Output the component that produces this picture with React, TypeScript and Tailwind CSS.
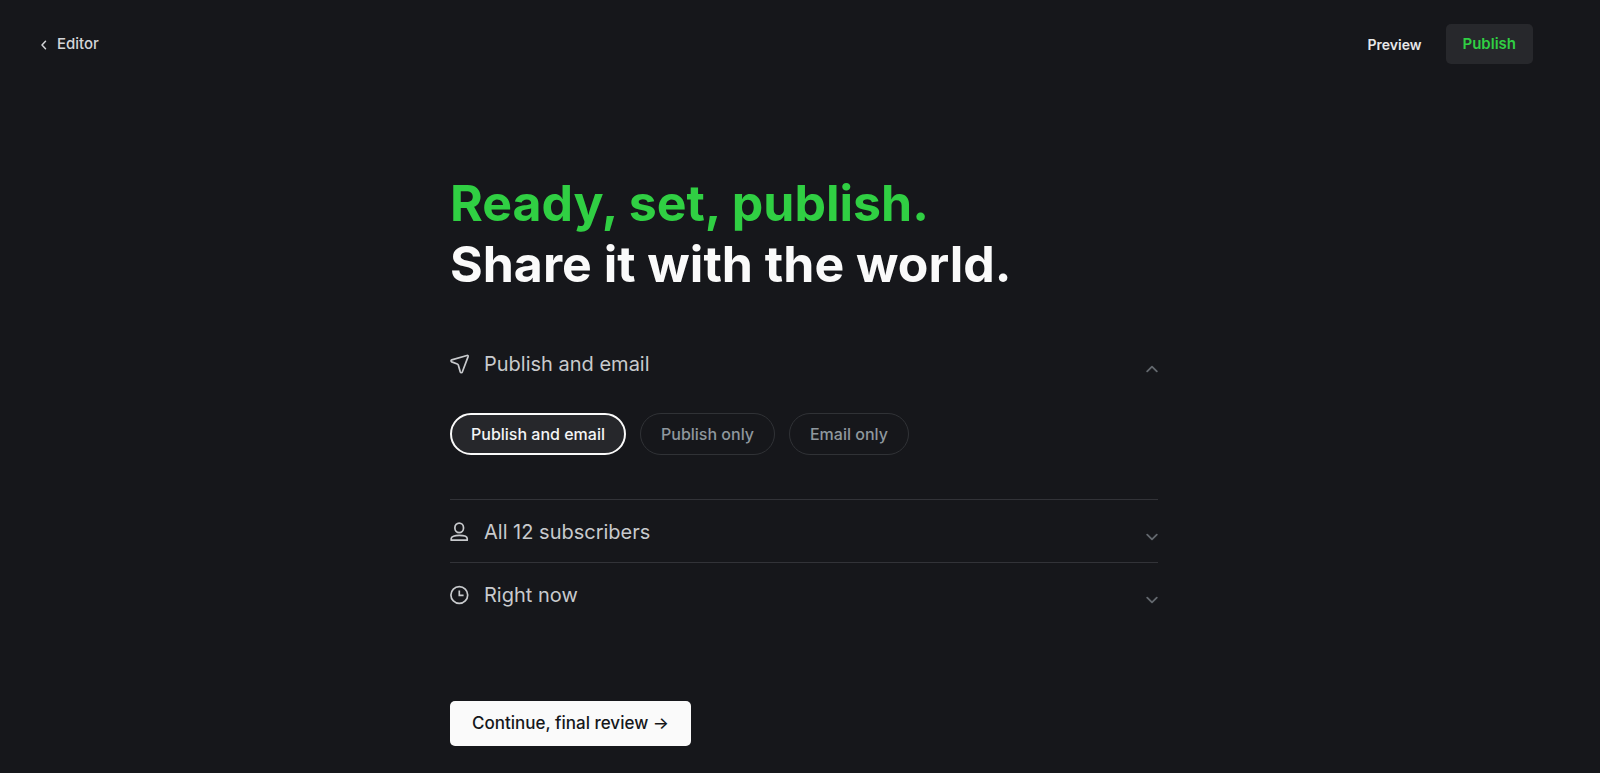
import type { ReactNode } from 'react';
import clsx from 'clsx';

type Setting = {
    id: string;
    label: string;
    icon: ReactNode;
    open?: boolean;
};

const publishTypes = [
    { value: 'publish+send', label: 'Publish and email' },
    { value: 'publish', label: 'Publish only' },
    { value: 'send', label: 'Email only' },
];

function Icon({ children }: { children: ReactNode }) {
    return (
        <svg
            className="size-5 shrink-0"
            viewBox="0 0 20 20"
            fill="none"
            stroke="currentColor"
            strokeWidth="1.7"
            strokeLinecap="round"
            strokeLinejoin="round"
            aria-hidden="true"
        >
            {children}
        </svg>
    );
}

function Chevron({ open }: { open?: boolean }) {
    return (
        <svg
            className="mt-[10px] h-2 w-3 shrink-0 text-[#63686e]"
            viewBox="0 0 12 8"
            fill="none"
            stroke="currentColor"
            strokeWidth="1.8"
            strokeLinecap="round"
            strokeLinejoin="round"
            aria-hidden="true"
        >
            <path d={open ? 'M1.2 6.4 6 1.6l4.800 4.800' : 'M1.200 1.600 6 6.400l4.800-4.800'} />
        </svg>
    );
}

const settings: Setting[] = [
    {
        id: 'publish-type',
        label: 'Publish and email',
        open: true,
        icon: (
            <Icon>
                <path d="M17 1.500 1.700 5.900c-.95.300-.95 1.600 0 2l5.600 2.100c.5.200.85.5 1 1l2 7c.35 1 1.700 1 2 0L18.100 2.600c.25-.75-.35-1.300-1.100-1.100Z" />
            </Icon>
        ),
    },
    {
        id: 'recipients',
        label: 'All 12 subscribers',
        icon: (
            <Icon>
                <rect x="4.900" y="1.200" width="8.600" height="9.400" rx="4.300" />
                <path d="M1.200 18.200v-1.600c0-1.900 3.400-3.200 8-3.200s8 1.300 8 3.200v1.600Z" />
            </Icon>
        ),
    },
    {
        id: 'publish-at',
        label: 'Right now',
        icon: (
            <Icon>
                <circle cx="9.300" cy="10" r="8.400" />
                <path d="M9.300 5.500v4.900h4.300" strokeLinecap="butt" strokeLinejoin="miter" />
            </Icon>
        ),
    },
];

function PublishTypePills() {
    return (
        <div role="radiogroup" aria-label="Publish type" className="flex flex-wrap gap-[14px] pt-[19px] pb-11">
            {publishTypes.map((type, index) => (
                <label
                    key={type.value}
                    className={clsx(
                        'relative flex h-[42px] cursor-pointer items-center rounded-full text-[16px] font-medium',
                        index === 0
                            ? 'border-2 border-[#fafafa] bg-[#26272b] px-[19px] text-[#f4f5f6]'
                            : 'border border-[#303236] px-5 text-[#8f979e]'
                    )}
                >
                    <input
                        type="radio"
                        name="publish-type"
                        value={type.value}
                        defaultChecked={index === 0}
                        className="sr-only"
                    />
                    {type.label}
                </label>
            ))}
        </div>
    );
}

export default function App() {
    return (
        <div className="min-h-screen bg-[#16171b] font-['Inter',sans-serif] text-[#c8cacd]">
            <header className="flex items-center justify-between pt-6 pr-[67px] pl-10">
                <a href="#editor" className="flex items-center gap-[10px] text-[15px] font-medium text-[#d3d5d8]">
                    <svg
                        className="mt-0.5 h-[10px] w-[7px]"
                        viewBox="0 0 7 10"
                        fill="none"
                        stroke="currentColor"
                        strokeWidth="1.5"
                        strokeLinecap="round"
                        strokeLinejoin="round"
                        aria-hidden="true"
                    >
                        <path d="M5.500 1.300 2 5l3.500 3.700" />
                    </svg>
                    Editor
                </a>
                <div className="flex items-center gap-2">
                    <button type="button" className="h-10 px-4 text-[14px] font-semibold text-[#e6e7e9]">
                        Preview
                    </button>
                    <button
                        type="button"
                        className="h-10 rounded-[5px] bg-[#27282c] px-[17px] text-[15px] font-semibold text-[#30cf43]"
                    >
                        Publish
                    </button>
                </div>
            </header>

            <main className="pt-[109px] pb-7 pl-2">
                <div className="mx-auto max-w-[708px]">
                    <h1 className="text-[50px] leading-[61px] font-bold text-[#fafafa]">
                        <span className="block text-[#30cf43]">Ready, set, publish.</span>
                        Share it with the world.
                    </h1>

                    <div className="mt-[37px]">
                        {settings.map((setting) => (
                            <section key={setting.id} className="border-b border-[#323338] last:border-b-0">
                                <button
                                    type="button"
                                    aria-expanded={Boolean(setting.open)}
                                    className="flex h-[62px] w-full items-center gap-[14px] pt-0.5 text-left text-[20px]"
                                >
                                    {setting.icon}
                                    <span className="flex-1">{setting.label}</span>
                                    <Chevron open={setting.open} />
                                </button>
                                {setting.open && <PublishTypePills />}
                            </section>
                        ))}
                    </div>

                    <button
                        type="button"
                        className="mt-[76px] h-[45px] rounded-[5px] bg-[#fafafa] px-[22px] text-[17px] font-medium text-[#15171a]"
                    >
                        Continue, final review →
                    </button>
                </div>
            </main>
        </div>
    );
}
